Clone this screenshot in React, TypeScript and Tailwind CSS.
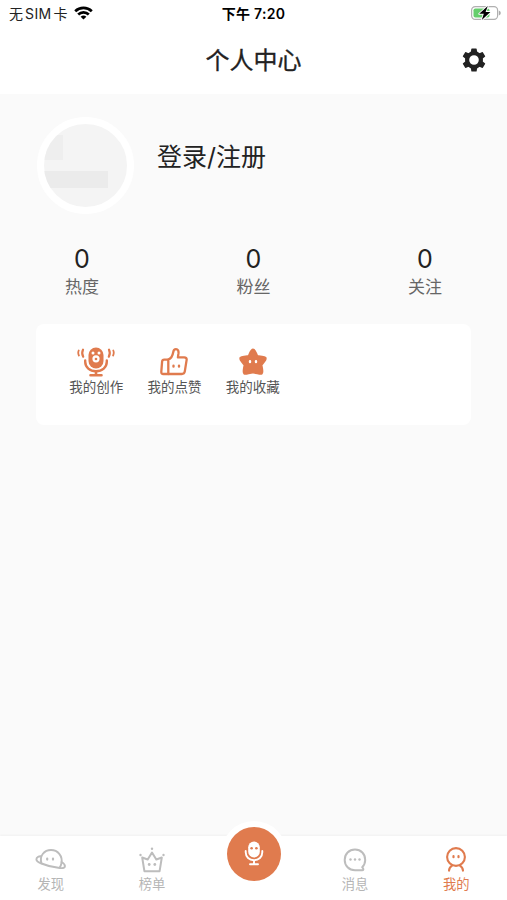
import type { ReactNode } from 'react';

const ORANGE = '#e07b4e';
const GRAY = '#bdbdbd';
const GEAR_ANGLES = [0, 60, 120, 180, 240, 300];

function WifiIcon() {
  return (
    <svg width="19" height="14" viewBox="0 0 19 14" fill="none" stroke="#000" strokeWidth="2.7">
      <path d="M1.2 5.2a12 12 0 0 1 16.6 0" />
      <path d="M4.2 8.5a7.6 7.6 0 0 1 10.6 0" />
      <path d="M9.5 13.6 6.6 10.8a4.2 4.2 0 0 1 5.8 0z" fill="#000" stroke="none" />
    </svg>
  );
}

function BatteryIcon() {
  return (
    <svg width="32" height="16" viewBox="0 0 32 16">
      <rect x="1.6" y="1.6" width="26" height="12.8" rx="3.6" fill="#fff" stroke="#b0b0b0" strokeWidth="1.2" />
      <path d="M28.8 5.5q2 .7 2 2.5t-2 2.5z" fill="#aaa" />
      <rect x="3.5" y="3.5" width="16" height="9" rx="1.8" fill="#65ce6c" />
      <path d="M17.8 1 9.2 8.8h4.6L11.8 15l8.6-8h-4.8z" fill="#000" stroke="#fff" strokeWidth="1.8" paintOrder="stroke" strokeLinejoin="round" />
    </svg>
  );
}

function GearIcon() {
  return (
    <svg width="24" height="24" viewBox="0 0 24 24" fill="#222">
      <circle cx="12" cy="12" r="6.9" fill="none" stroke="#222" strokeWidth="4.2" />
      {GEAR_ANGLES.map((angle) => (
        <path key={angle} d="M8.8 4.5 9.3.9q.1-.5.6-.5h4.2q.5 0 .6.5l.5 3.6z" transform={`rotate(${angle} 12 12)`} />
      ))}
    </svg>
  );
}

function CreateIcon() {
  return (
    <svg width="38" height="30" viewBox="0 0 38 30" fill="none" stroke={ORANGE} strokeWidth="2" strokeLinecap="round">
      <rect x="11.5" y="0.5" width="15" height="21" rx="7.5" fill={ORANGE} stroke="none" />
      <path d="M8.2 13.5v1.3c0 5.5 4.6 9.5 10.8 9.5s10.8-4 10.8-9.5v-1.3" strokeWidth="2.4" />
      <path d="M19 24.5v3.5M13.5 28.3h11" strokeWidth="2.6" />
      <path d="M6 2.7c-1.1 2.2-1.1 4.700.2 7M32 2.7c1.1 2.2 1.1 4.700-.2 7" strokeWidth="2.2" />
      <path d="M1.700 3.5c-.7 1.600-.6 3.300.2 5M36.300 3.5c.7 1.600.6 3.300-.2 5" strokeWidth="1.8" />
      <circle cx="16" cy="6" r="1.5" fill="#fff" stroke="none" />
      <circle cx="22" cy="6" r="1.5" fill="#fff" stroke="none" />
      <circle cx="19" cy="11.8" r="3.6" fill="#fff" stroke="none" />
      <circle cx="19" cy="12" r="1.3" fill={ORANGE} stroke="none" />
    </svg>
  );
}

function LikeIcon() {
  return (
    <svg width="28" height="28" viewBox="0 0 28 28" fill="none" stroke={ORANGE} strokeWidth="2.3" strokeLinecap="round" strokeLinejoin="round">
      <path d="M8.3 11.6c2.8-1.2 4.3-3.6 4.9-7.4.3-2 1.3-3 2.8-3 2 0 2.7 1.7 2.5 4l-.6 4.2h6.3c1.8 0 2.7 1 2.4 2.7l-1.8 11.3c-.3 1.8-1.2 2.6-3 2.6H8.3z" />
      <path d="M8.3 11.6H4.2c-1.4 0-2 .7-2.1 2l-.8 10.3c-.1 1.4.6 2.1 2 2.1h5" />
      <path d="M13.5 17.7v.8M19 17.7v.8" strokeWidth="2.4" />
    </svg>
  );
}

function StarIcon() {
  return (
    <svg width="30" height="30" viewBox="0 0 30 30">
      <path
        d="M15 2.5c2 0 2.6 3.4 4.4 6.8 3.6.3 8 .4 8.3 2 .4 1.6-2.8 4.2-4.4 6.6.7 3.6 1.9 7.8.4 8.7-1.5.8-5.500-1.100-8.700-1.100s-7.200 1.900-8.700 1.100c-1.500-.9-.3-5.100.4-8.700-1.600-2.400-4.800-5-4.400-6.600.3-1.600 4.700-1.700 8.300-2 1.800-3.400 2.400-6.800 4.400-6.800z"
        fill={ORANGE} stroke={ORANGE} strokeWidth="2.2" strokeLinejoin="round"
      />
      <path d="M12 14.2v.9M18 14.2v.9" stroke="#fff" strokeWidth="2.4" strokeLinecap="round" />
    </svg>
  );
}

function PlanetIcon() {
  return (
    <svg width="32" height="24" viewBox="0 0 32 24" fill="none" stroke={GRAY} strokeWidth="1.9" strokeLinecap="round">
      <path d="M6.4 15.2C4.2 7.6 9.4 2 16 2s12 5.6 10.4 13.5c-.3 1.5-.9 2.900-1.700 4" />
      <path d="M6.2 8.3C3.4 8.1 1.5 9.3 1.4 11.2c-.1 1.8 2 3.2 5 4.3 5 2.1 11 3.8 18.2 4.5 3 .3 5 .1 5.3-1.5.3-1.5-1-3.1-3.4-4.5" />
      <path d="M12.2 10.6v1M18 10.6v1" strokeWidth="2.2" />
    </svg>
  );
}

function CrownIcon() {
  return (
    <svg width="26" height="26" viewBox="0 0 26 26" fill="none" stroke={GRAY} strokeWidth="2" strokeLinejoin="round">
      <path d="M3.2 10.5 8.7 12.5 13 5.5l4.3 7 5.5-2-2.2 13.7H5.4z" />
      <g fill={GRAY} stroke="none">
        <circle cx="13" cy="1.8" r="1.2" />
        <circle cx="1.5" cy="8" r="1.2" />
        <circle cx="24.5" cy="8" r="1.2" />
        <circle cx="10.2" cy="17.5" r="1.4" />
        <circle cx="15.8" cy="17.5" r="1.4" />
      </g>
    </svg>
  );
}

function MessageIcon() {
  return (
    <svg width="26" height="26" viewBox="0 0 26 26" fill="none" stroke={GRAY} strokeWidth="2" strokeLinejoin="round">
      <path d="M13 2.6C7 2.6 2.7 7 2.7 12.9S7 23.2 13 23.2h7.2c1.2 0 1.5-1 .8-2l-.8-1.1c1.9-1.9 3-4.4 3-7.2C23.2 7 19 2.6 13 2.6z" />
      <g fill={GRAY} stroke="none">
        <circle cx="8.5" cy="12.5" r="1.2" />
        <circle cx="13" cy="12.5" r="1.2" />
        <circle cx="17.5" cy="12.5" r="1.2" />
      </g>
    </svg>
  );
}

function MineIcon() {
  return (
    <svg width="26" height="26" viewBox="0 0 26 26" fill="none" stroke={ORANGE} strokeWidth="2.1" strokeLinecap="round">
      <circle cx="13" cy="10" r="8.9" />
      <path d="M9.3 18.3c-2 1.2-3.2 3-3.3 5.3M16.7 18.3c2 1.2 3.2 3 3.3 5.3" />
      <path d="M10.5 9.2v1M15.5 9.2v1" strokeWidth="2.2" />
    </svg>
  );
}

function MicIcon() {
  return (
    <svg width="20" height="26" viewBox="0 0 20 26" fill="none" stroke="#fff" strokeWidth="1.9" strokeLinecap="round">
      <rect x="4.2" y="0.5" width="11.6" height="16" rx="5.8" fill="#fff" stroke="none" />
      <path d="M1.7 10v1.3c0 4.7 3.5 7.9 8.3 7.9s8.3-3.2 8.3-7.9V10M10 19.5v3M6 23.3h8" />
      <circle cx="7.6" cy="7.3" r="1.3" fill={ORANGE} stroke="none" />
      <circle cx="12.4" cy="7.3" r="1.3" fill={ORANGE} stroke="none" />
    </svg>
  );
}

function Stat({ label }: { label: string }) {
  return (
    <div className="flex w-[92px] flex-col items-center">
      <span className="h-[28px] text-[25px] leading-[28px] text-[#222]">0</span>
      <span className="pt-px text-[17px] leading-[26px] text-[#666]">{label}</span>
    </div>
  );
}

function MenuItem({ label, children }: { label: string; children: ReactNode }) {
  return (
    <div className="flex w-[78.3px] flex-col items-center">
      <div className="flex h-[30px] items-center">{children}</div>
      <span className="whitespace-nowrap text-[13.5px] leading-[20px] text-[#555]">{label}</span>
    </div>
  );
}

function Tab({ label, active, children }: { label: string; active?: boolean; children: ReactNode }) {
  return (
    <div className={`flex flex-1 flex-col items-center pt-[10px] ${active ? 'text-[#e07b4e]' : 'text-[#b5b5b5]'}`}>
      <div className="flex h-[28px] items-center">{children}</div>
      <span className="text-[13.3px] leading-[20px]">{label}</span>
    </div>
  );
}

export default function App() {
  return (
    <div className="flex h-[900px] w-[507px] flex-col overflow-hidden bg-[#fafafa] font-[Inter,'Noto_Sans_CJK_SC',sans-serif]">
      <header className="h-[94px] bg-white">
        <div className="grid h-[26px] grid-cols-[1fr_auto_1fr] items-center text-black">
          <div className="flex items-center gap-[6px] pl-[9px] text-[14px]">
            <span className="flex gap-[2px] text-[#222]">
              <span>无</span>
              <span className="tracking-[0.4px]">SIM</span>
              <span>卡</span>
            </span>
            <WifiIcon />
          </div>
          <span className="text-[14px] font-semibold tracking-[0.3px]">下午 7:20</span>
          <div className="flex justify-end pr-[5px]"><BatteryIcon /></div>
        </div>
        <div className="grid h-[68px] grid-cols-[1fr_auto_1fr] items-center">
          <span />
          <h1 className="pt-px text-[24px] font-normal text-[#222] [-webkit-text-stroke:0.3px_#222]">个人中心</h1>
          <div className="flex justify-end pr-[21px]"><GearIcon /></div>
        </div>
      </header>

      <main className="flex-1">
        <section className="flex pl-[37px] pt-[23px]">
          <div className="size-[97px] overflow-hidden rounded-full border-[7px] border-white bg-[#f4f4f4]">
            <div className="mt-[11px] h-[25px] w-[19px] bg-[#eeeeee]" />
            <div className="mt-[11px] h-[17px] w-[64px] bg-[#ebebeb]" />
          </div>
          <span className="ml-[23px] mt-[21px] text-[25px] leading-[38px] text-[#222]">登录/注册</span>
        </section>

        <section className="mt-[31px] flex justify-between px-[36px]">
          <Stat label="热度" />
          <Stat label="粉丝" />
          <Stat label="关注" />
        </section>

        <section className="ml-[36px] mt-[24px] flex h-[101px] w-[435px] rounded-[8px] bg-white pl-[21px] pt-[23px]">
          <MenuItem label="我的创作"><CreateIcon /></MenuItem>
          <MenuItem label="我的点赞"><LikeIcon /></MenuItem>
          <MenuItem label="我的收藏"><StarIcon /></MenuItem>
        </section>
      </main>

      <nav className="flex h-[64px] bg-white shadow-[0_-1px_2px_rgba(0,0,0,0.04)]">
        <Tab label="发现"><PlanetIcon /></Tab>
        <Tab label="榜单"><CrownIcon /></Tab>
        <div className="flex flex-1 justify-center">
          <div className="-mt-[15px] flex size-[66px] items-center justify-center rounded-full bg-white">
            <div className="flex size-[54px] items-center justify-center rounded-full bg-[#e07b4e]"><MicIcon /></div>
          </div>
        </div>
        <Tab label="消息"><MessageIcon /></Tab>
        <Tab label="我的" active><MineIcon /></Tab>
      </nav>
    </div>
  );
}
